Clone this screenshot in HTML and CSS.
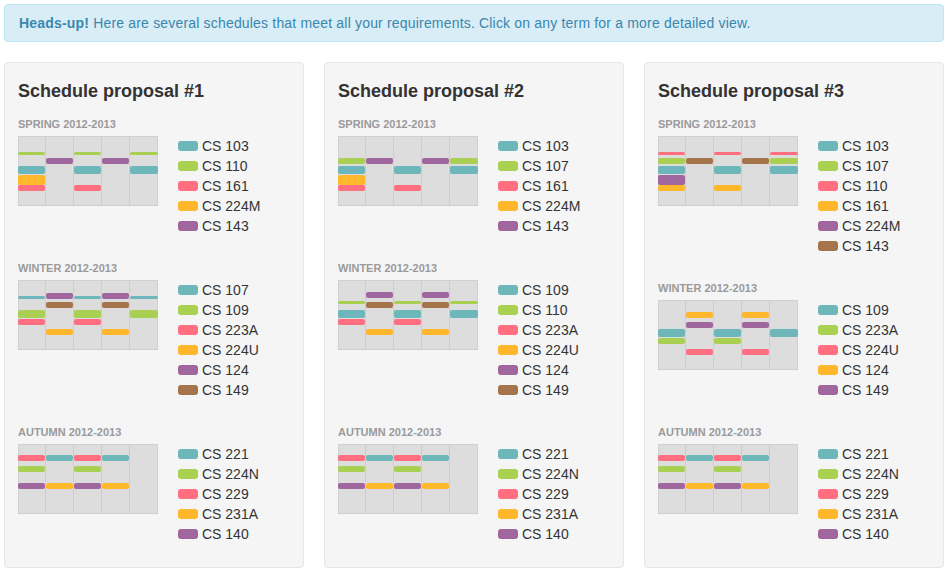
FILE: index.html
```html
<!DOCTYPE html>
<html>
<head>
<meta charset="utf-8">
<title>Schedule proposals</title>
<link rel="stylesheet" href="styles.css">
</head>
<body>
<div class="page">
  <div class="alert"><strong>Heads-up!</strong> Here are several schedules that meet all your requirements. Click on any term for a more detailed view.</div>
  <div class="proposals">

    <div class="card">
      <h3 class="title">Schedule proposal #1</h3>
      <div class="section">
        <div class="term">SPRING 2012-2013</div>
        <div class="row">
          <div class="cal">
            <div class="col"><i class="ev green" style="top:16px;height:3px"></i><i class="ev teal" style="top:29.5px;height:8px"></i><i class="ev orange" style="top:39px;height:10px"></i><i class="ev pink" style="top:49.3px;height:6px"></i></div>
            <div class="col"><i class="ev purple" style="top:21.5px;height:6px"></i></div>
            <div class="col"><i class="ev green" style="top:16px;height:3px"></i><i class="ev teal" style="top:29.5px;height:8px"></i><i class="ev pink" style="top:49.3px;height:6px"></i></div>
            <div class="col"><i class="ev purple" style="top:21.5px;height:6px"></i></div>
            <div class="col"><i class="ev green" style="top:16px;height:3px"></i><i class="ev teal" style="top:29.5px;height:8px"></i></div>
          </div>
          <ul class="legend">
            <li><span class="sw teal"></span>CS 103</li>
            <li><span class="sw green"></span>CS 110</li>
            <li><span class="sw pink"></span>CS 161</li>
            <li><span class="sw orange"></span>CS 224M</li>
            <li><span class="sw purple"></span>CS 143</li>
          </ul>
        </div>
      </div>
      <div class="section">
        <div class="term">WINTER 2012-2013</div>
        <div class="row">
          <div class="cal">
            <div class="col"><i class="ev teal" style="top:16px;height:3px"></i><i class="ev green" style="top:29.5px;height:8px"></i><i class="ev pink" style="top:38.5px;height:6px"></i></div>
            <div class="col"><i class="ev purple" style="top:12.5px;height:6px"></i><i class="ev brown" style="top:21.5px;height:6px"></i><i class="ev orange" style="top:49px;height:6px"></i></div>
            <div class="col"><i class="ev teal" style="top:16px;height:3px"></i><i class="ev green" style="top:29.5px;height:8px"></i><i class="ev pink" style="top:38.5px;height:6px"></i></div>
            <div class="col"><i class="ev purple" style="top:12.5px;height:6px"></i><i class="ev brown" style="top:21.5px;height:6px"></i><i class="ev orange" style="top:49px;height:6px"></i></div>
            <div class="col"><i class="ev teal" style="top:16px;height:3px"></i><i class="ev green" style="top:29.5px;height:8px"></i></div>
          </div>
          <ul class="legend">
            <li><span class="sw teal"></span>CS 107</li>
            <li><span class="sw green"></span>CS 109</li>
            <li><span class="sw pink"></span>CS 223A</li>
            <li><span class="sw orange"></span>CS 224U</li>
            <li><span class="sw purple"></span>CS 124</li>
            <li><span class="sw brown"></span>CS 149</li>
          </ul>
        </div>
      </div>
      <div class="section">
        <div class="term">AUTUMN 2012-2013</div>
        <div class="row">
          <div class="cal">
            <div class="col"><i class="ev pink" style="top:10.7px;height:6px"></i><i class="ev green" style="top:21.5px;height:6px"></i><i class="ev purple" style="top:38.5px;height:6px"></i></div>
            <div class="col"><i class="ev teal" style="top:10.7px;height:6px"></i><i class="ev orange" style="top:38.5px;height:6px"></i></div>
            <div class="col"><i class="ev pink" style="top:10.7px;height:6px"></i><i class="ev green" style="top:21.5px;height:6px"></i><i class="ev purple" style="top:38.5px;height:6px"></i></div>
            <div class="col"><i class="ev teal" style="top:10.7px;height:6px"></i><i class="ev orange" style="top:38.5px;height:6px"></i></div>
            <div class="col"></div>
          </div>
          <ul class="legend">
            <li><span class="sw teal"></span>CS 221</li>
            <li><span class="sw green"></span>CS 224N</li>
            <li><span class="sw pink"></span>CS 229</li>
            <li><span class="sw orange"></span>CS 231A</li>
            <li><span class="sw purple"></span>CS 140</li>
          </ul>
        </div>
      </div>
    </div>

    <div class="card">
      <h3 class="title">Schedule proposal #2</h3>
      <div class="section">
        <div class="term">SPRING 2012-2013</div>
        <div class="row">
          <div class="cal">
            <div class="col"><i class="ev green" style="top:21.5px;height:6px"></i><i class="ev teal" style="top:29.5px;height:8px"></i><i class="ev orange" style="top:38.7px;height:10px"></i><i class="ev pink" style="top:49.2px;height:6px"></i></div>
            <div class="col"><i class="ev purple" style="top:21.5px;height:6px"></i></div>
            <div class="col"><i class="ev teal" style="top:29.5px;height:8px"></i><i class="ev pink" style="top:49.2px;height:6px"></i></div>
            <div class="col"><i class="ev purple" style="top:21.5px;height:6px"></i></div>
            <div class="col"><i class="ev green" style="top:21.5px;height:6px"></i><i class="ev teal" style="top:29.5px;height:8px"></i></div>
          </div>
          <ul class="legend">
            <li><span class="sw teal"></span>CS 103</li>
            <li><span class="sw green"></span>CS 107</li>
            <li><span class="sw pink"></span>CS 161</li>
            <li><span class="sw orange"></span>CS 224M</li>
            <li><span class="sw purple"></span>CS 143</li>
          </ul>
        </div>
      </div>
      <div class="section">
        <div class="term">WINTER 2012-2013</div>
        <div class="row">
          <div class="cal">
            <div class="col"><i class="ev green" style="top:21.3px;height:2.7px"></i><i class="ev teal" style="top:29.5px;height:8px"></i><i class="ev pink" style="top:38.6px;height:6px"></i></div>
            <div class="col"><i class="ev purple" style="top:12.4px;height:6px"></i><i class="ev brown" style="top:21.6px;height:6px"></i><i class="ev orange" style="top:49px;height:6px"></i></div>
            <div class="col"><i class="ev green" style="top:21.3px;height:2.7px"></i><i class="ev teal" style="top:29.5px;height:8px"></i><i class="ev pink" style="top:38.6px;height:6px"></i></div>
            <div class="col"><i class="ev purple" style="top:12.4px;height:6px"></i><i class="ev brown" style="top:21.6px;height:6px"></i><i class="ev orange" style="top:49px;height:6px"></i></div>
            <div class="col"><i class="ev green" style="top:21.3px;height:2.7px"></i><i class="ev teal" style="top:29.5px;height:8px"></i></div>
          </div>
          <ul class="legend">
            <li><span class="sw teal"></span>CS 109</li>
            <li><span class="sw green"></span>CS 110</li>
            <li><span class="sw pink"></span>CS 223A</li>
            <li><span class="sw orange"></span>CS 224U</li>
            <li><span class="sw purple"></span>CS 124</li>
            <li><span class="sw brown"></span>CS 149</li>
          </ul>
        </div>
      </div>
      <div class="section">
        <div class="term">AUTUMN 2012-2013</div>
        <div class="row">
          <div class="cal">
            <div class="col"><i class="ev pink" style="top:10.7px;height:6px"></i><i class="ev green" style="top:21.5px;height:6px"></i><i class="ev purple" style="top:38.5px;height:6px"></i></div>
            <div class="col"><i class="ev teal" style="top:10.7px;height:6px"></i><i class="ev orange" style="top:38.5px;height:6px"></i></div>
            <div class="col"><i class="ev pink" style="top:10.7px;height:6px"></i><i class="ev green" style="top:21.5px;height:6px"></i><i class="ev purple" style="top:38.5px;height:6px"></i></div>
            <div class="col"><i class="ev teal" style="top:10.7px;height:6px"></i><i class="ev orange" style="top:38.5px;height:6px"></i></div>
            <div class="col"></div>
          </div>
          <ul class="legend">
            <li><span class="sw teal"></span>CS 221</li>
            <li><span class="sw green"></span>CS 224N</li>
            <li><span class="sw pink"></span>CS 229</li>
            <li><span class="sw orange"></span>CS 231A</li>
            <li><span class="sw purple"></span>CS 140</li>
          </ul>
        </div>
      </div>
    </div>

    <div class="card">
      <h3 class="title">Schedule proposal #3</h3>
      <div class="section">
        <div class="term">SPRING 2012-2013</div>
        <div class="row">
          <div class="cal">
            <div class="col"><i class="ev pink" style="top:16px;height:3px"></i><i class="ev green" style="top:21.6px;height:6px"></i><i class="ev teal" style="top:29.6px;height:8px"></i><i class="ev purple" style="top:38.7px;height:10px"></i><i class="ev orange" style="top:49.2px;height:6px"></i></div>
            <div class="col"><i class="ev brown" style="top:21.6px;height:6px"></i></div>
            <div class="col"><i class="ev pink" style="top:16px;height:3px"></i><i class="ev teal" style="top:29.6px;height:8px"></i><i class="ev orange" style="top:49.2px;height:6px"></i></div>
            <div class="col"><i class="ev brown" style="top:21.6px;height:6px"></i></div>
            <div class="col"><i class="ev pink" style="top:16px;height:3px"></i><i class="ev green" style="top:21.6px;height:6px"></i><i class="ev teal" style="top:29.6px;height:8px"></i></div>
          </div>
          <ul class="legend">
            <li><span class="sw teal"></span>CS 103</li>
            <li><span class="sw green"></span>CS 107</li>
            <li><span class="sw pink"></span>CS 110</li>
            <li><span class="sw orange"></span>CS 161</li>
            <li><span class="sw purple"></span>CS 224M</li>
            <li><span class="sw brown"></span>CS 143</li>
          </ul>
        </div>
      </div>
      <div class="section">
        <div class="term">WINTER 2012-2013</div>
        <div class="row">
          <div class="cal">
            <div class="col"><i class="ev teal" style="top:29.4px;height:8px"></i><i class="ev green" style="top:38.4px;height:6px"></i></div>
            <div class="col"><i class="ev orange" style="top:12.4px;height:6px"></i><i class="ev purple" style="top:21.6px;height:6px"></i><i class="ev pink" style="top:49px;height:6px"></i></div>
            <div class="col"><i class="ev teal" style="top:29.4px;height:8px"></i><i class="ev green" style="top:38.4px;height:6px"></i></div>
            <div class="col"><i class="ev orange" style="top:12.4px;height:6px"></i><i class="ev purple" style="top:21.6px;height:6px"></i><i class="ev pink" style="top:49px;height:6px"></i></div>
            <div class="col"><i class="ev teal" style="top:29.4px;height:8px"></i></div>
          </div>
          <ul class="legend">
            <li><span class="sw teal"></span>CS 109</li>
            <li><span class="sw green"></span>CS 223A</li>
            <li><span class="sw pink"></span>CS 224U</li>
            <li><span class="sw orange"></span>CS 124</li>
            <li><span class="sw purple"></span>CS 149</li>
          </ul>
        </div>
      </div>
      <div class="section">
        <div class="term">AUTUMN 2012-2013</div>
        <div class="row">
          <div class="cal">
            <div class="col"><i class="ev pink" style="top:10.7px;height:6px"></i><i class="ev green" style="top:21.5px;height:6px"></i><i class="ev purple" style="top:38.5px;height:6px"></i></div>
            <div class="col"><i class="ev teal" style="top:10.7px;height:6px"></i><i class="ev orange" style="top:38.5px;height:6px"></i></div>
            <div class="col"><i class="ev pink" style="top:10.7px;height:6px"></i><i class="ev green" style="top:21.5px;height:6px"></i><i class="ev purple" style="top:38.5px;height:6px"></i></div>
            <div class="col"><i class="ev teal" style="top:10.7px;height:6px"></i><i class="ev orange" style="top:38.5px;height:6px"></i></div>
            <div class="col"></div>
          </div>
          <ul class="legend">
            <li><span class="sw teal"></span>CS 221</li>
            <li><span class="sw green"></span>CS 224N</li>
            <li><span class="sw pink"></span>CS 229</li>
            <li><span class="sw orange"></span>CS 231A</li>
            <li><span class="sw purple"></span>CS 140</li>
          </ul>
        </div>
      </div>
    </div>

  </div>
</div>
</body>
</html>
```
FILE: styles.css
```css
html, body {
  margin: 0;
  background: #ffffff;
}
body {
  padding: 4px;
  font-family: "Liberation Sans", Arial, Helvetica, sans-serif;
  font-size: 14px;
  line-height: 20px;
  color: #333333;
}
.page {
  width: 940px;
}
.alert {
  background: #d9edf7;
  border: 1px solid #bce8f1;
  border-radius: 4px;
  color: #3a87ad;
  padding: 8px 14px;
  margin-bottom: 20px;
  letter-spacing: 0.18px;
}
.alert strong {
  font-weight: bold;
}
.proposals {
  display: flex;
  gap: 20px;
  align-items: stretch;
}
.card {
  width: 300px;
  box-sizing: border-box;
  background: #f5f5f5;
  border: 1px solid #e6e6e6;
  border-radius: 4px;
  padding: 18px 13px 23px;
}
.title {
  margin: 0 0 16px;
  font-size: 18px;
  line-height: 20px;
  font-weight: bold;
  color: #333333;
}
.section + .section {
  margin-top: 25px;
}
.term {
  font-size: 11px;
  line-height: 14px;
  font-weight: bold;
  color: #9a9a9a;
  margin-bottom: 5px;
}
.row {
  display: flex;
  align-items: flex-start;
  gap: 20px;
}
.cal {
  flex: none;
  display: flex;
  width: 140px;
  height: 70px;
  background: #dddddd;
  box-shadow: inset 0 0 0 1px #d0d0d0;
}
.col {
  position: relative;
  width: 28px;
  box-sizing: border-box;
  border-right: 1px solid #cdcdcd;
}
.col:last-child {
  border-right: 0;
}
.ev {
  position: absolute;
  left: 0;
  right: 0;
  border-radius: 2px;
}
.legend {
  list-style: none;
  margin: 0;
  padding: 0;
}
.legend li {
  display: flex;
  align-items: center;
  gap: 4px;
  height: 20px;
}
.sw {
  display: block;
  width: 20px;
  height: 10px;
  border-radius: 3px;
  flex: none;
}
.teal { background: #6db6ba; }
.green { background: #a9d052; }
.pink { background: #ff6f80; }
.orange { background: #ffb72b; }
.purple { background: #a0679f; }
.brown { background: #a5744a; }
```
